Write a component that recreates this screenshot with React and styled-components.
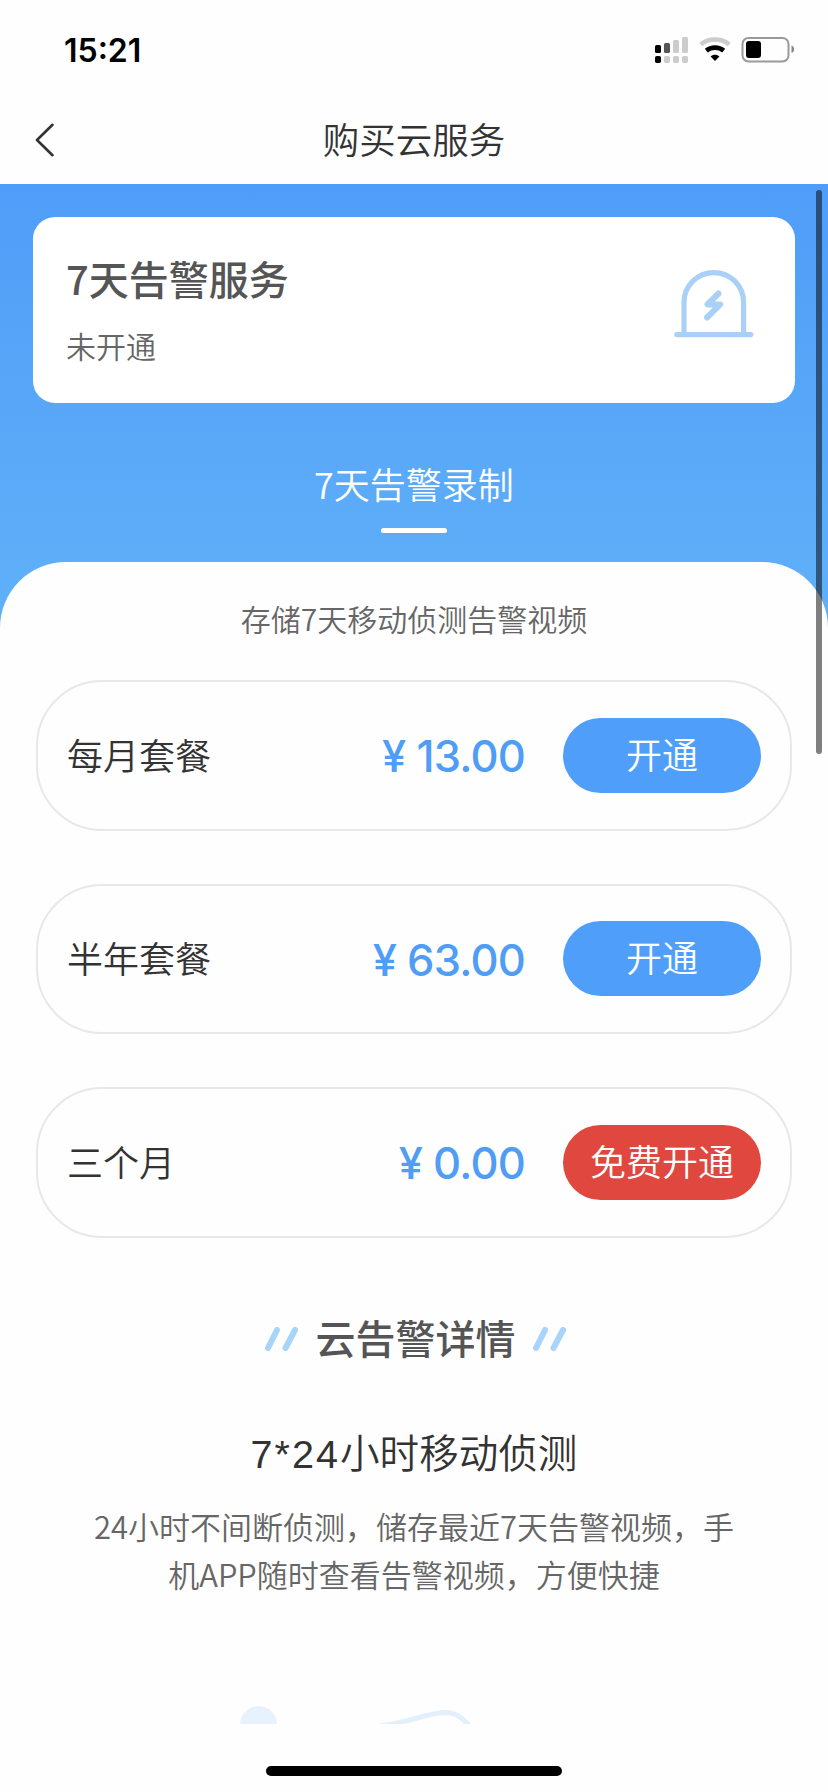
import React from 'react';
import styled, { createGlobalStyle } from 'styled-components';

const plans = [
  { id: 1, name: '每月套餐', price: '13.00', button: '开通', free: false },
  { id: 2, name: '半年套餐', price: '63.00', button: '开通', free: false },
  { id: 3, name: '三个月', price: '0.00', button: '免费开通', free: true },
];

const SignalIcon = () => (
  <svg width='34' height='28' viewBox='0 0 34 28'>
    <rect x='0' y='9' width='6' height='8' rx='1.5' fill='#000' />
    <rect x='9' y='7' width='6' height='10' rx='1.5' fill='#555' />
    <rect x='18' y='4' width='6' height='13' rx='1.5' fill='#ccc' />
    <rect x='27' y='1' width='6' height='16' rx='1.5' fill='#ccc' />
    <rect x='0' y='20' width='6' height='7' rx='1.8' fill='#000' />
    <rect x='9' y='20' width='6' height='7' rx='1.8' fill='#ccc' />
    <rect x='18' y='20' width='6' height='7' rx='1.8' fill='#ccc' />
    <rect x='27' y='20' width='6' height='7' rx='1.8' fill='#ccc' />
  </svg>
);

const WifiIcon = () => (
  <svg width='32' height='26' viewBox='0 0 32 26' fill='none'>
    <path d='M1.8 8.4C9.8 1.8 22.2 1.8 30.2 8.4' stroke='#ccc' strokeWidth='4.6' />
    <path d='M7.3 14.6C12.2 10.6 19.8 10.6 24.7 14.6' stroke='#000' strokeWidth='4.6' />
    <path d='M16 25L11.6 20.6C14 18.2 18 18.2 20.4 20.6Z' fill='#000' />
  </svg>
);

const BatteryIcon = () => (
  <svg width='54' height='27' viewBox='0 0 54 27'>
    <rect x='1.5' y='2' width='46' height='23.5' rx='6' fill='none' stroke='#999' strokeWidth='2' />
    <rect x='5' y='5' width='15' height='17' rx='3' fill='#000' />
    <path d='M50.5 9.5C54 10.5 54 16 50.5 17Z' fill='#888' />
  </svg>
);

const BackIcon = () => (
  <svg width='20' height='34' viewBox='0 0 20 34' fill='none'>
    <path d='M17.5 1.8L2 17L17.5 32.2' stroke='#333' strokeWidth='2.6' strokeLinecap='round' strokeLinejoin='round' />
  </svg>
);

const AlarmIcon = () => (
  <svg width='80' height='68' viewBox='0 0 80 68' fill='none' stroke='#a9d0f7' strokeLinecap='round' strokeLinejoin='round'>
    <path d='M10 64V32.5C10 15.5 23.5 2.6 39.8 2.6S69.6 15.5 69.6 32.5V64' strokeWidth='5.2' />
    <path d='M2.8 64.6H76.8' strokeWidth='5.2' />
    <path d='M44.5 23.5L33.5 34.4H46.2L33 47.5' strokeWidth='6' />
  </svg>
);

const Slashes = () => (
  <svg width='36' height='26' viewBox='0 0 36 26' stroke='#a9d4f9' strokeWidth='6' strokeLinecap='round'>
    <path d='M4 22L13 4M21.5 22L31 4' />
  </svg>
);

const Illustration = () => (
  <svg width='240' height='20' viewBox='0 0 240 20' fill='none'>
    <circle cx='18.5' cy='19.5' r='18.5' fill='#e7f2fd' />
    <path d='M140 21C167 18.5 185 8 205 7.5C216 7.5 222 13 229 20.5' stroke='#e3effb' strokeWidth='5' />
  </svg>
);

const App = () => {
  return (
    <>
      <GlobalStyle />
      <Screen>
        <StatusBar>
          <Time>15:21</Time>
          <StatusIcons>
            <SignalIcon />
            <WifiIcon />
            <BatteryIcon />
          </StatusIcons>
        </StatusBar>
        <NavBar>
          <Back>
            <BackIcon />
          </Back>
          <NavTitle>购买云服务</NavTitle>
        </NavBar>
        <Body>
          <ServiceCard>
            <div>
              <ServiceName>7天告警服务</ServiceName>
              <ServiceState>未开通</ServiceState>
            </div>
            <AlarmIcon />
          </ServiceCard>
          <Tab>7天告警录制</Tab>
          <Panel>
            <PanelDesc>存储7天移动侦测告警视频</PanelDesc>
            <PlanList>
              {plans.map(plan => (
                <Plan key={plan.id}>
                  <PlanName>{plan.name}</PlanName>
                  <Price>
                    <Yen>¥</Yen>
                    {plan.price}
                  </Price>
                  <BuyButton $free={plan.free}>{plan.button}</BuyButton>
                </Plan>
              ))}
            </PlanList>
            <DetailTitle>
              <Slashes />
              <span>云告警详情</span>
              <Slashes />
            </DetailTitle>
            <FeatureTitle>
              <Latin>7*24</Latin>小时移动侦测
            </FeatureTitle>
            <FeatureText>
              24小时不间断侦测，储存最近7天告警视频，手
              <br />
              机APP随时查看告警视频，方便快捷
            </FeatureText>
            <Picture>
              <Illustration />
            </Picture>
          </Panel>
          <ScrollThumb />
        </Body>
        <HomeArea>
          <HomeBar />
        </HomeArea>
      </Screen>
    </>
  );
};

const GlobalStyle = createGlobalStyle`
  * {
    box-sizing: border-box;
  }
  body {
    margin: 0;
    background: #fff;
    font-family: 'Noto Sans CJK SC', sans-serif;
    font-weight: 350;
  }
  svg {
    display: block;
    flex-shrink: 0;
  }
`;

const Screen = styled.div`
  display: flex;
  flex-direction: column;
  width: 828px;
  height: 1792px;
  overflow: hidden;
  background: #fefefe;
`;

const StatusBar = styled.div`
  display: flex;
  justify-content: space-between;
  height: 96px;
  padding: 0 33px 0 64px;
`;

const Time = styled.span`
  font-family: Inter, sans-serif;
  font-size: 32px;
  font-weight: 600;
  line-height: 101px;
  color: #000;
`;

const StatusIcons = styled.div`
  display: flex;
  gap: 10px;
  padding-top: 36px;
`;

const NavBar = styled.div`
  display: grid;
  grid-template-columns: 100px 1fr 100px;
  align-items: center;
  height: 88px;
`;

const Back = styled.div`
  padding-left: 35px;
`;

const NavTitle = styled.div`
  padding-bottom: 2px;
  font-size: 36.5px;
  line-height: 84px;
  text-align: center;
  color: #333;
`;

const Body = styled.div`
  position: relative;
  height: 1540px;
  overflow: hidden;
  background: linear-gradient(#4f9df8 0, #60b1f9 450px);
`;

const ServiceCard = styled.div`
  display: flex;
  justify-content: space-between;
  height: 186px;
  margin: 33px 33px 0;
  padding: 33px 41px 0 33px;
  border-radius: 22px;
  background: #fff;
  svg {
    margin-top: 20px;
  }
`;

const ServiceName = styled.div`
  font-size: 40px;
  font-weight: 500;
  line-height: 57px;
  color: #555;
`;

const ServiceState = styled.div`
  margin-top: 17px;
  font-size: 30px;
  line-height: 42px;
  color: #666;
`;

const Tab = styled.div`
  display: flex;
  flex-direction: column;
  align-items: center;
  height: 159px;
  padding-top: 55px;
  font-size: 36px;
  line-height: 50px;
  color: #fff;
  &::after {
    content: '';
    width: 66px;
    height: 5px;
    margin-top: 20px;
    border-radius: 3px;
    background: #fff;
  }
`;

const Panel = styled.div`
  height: 1162px;
  padding: 35px 36px 0;
  border-radius: 66px 66px 0 0;
  background: #fefefe;
`;

const PanelDesc = styled.div`
  font-size: 30px;
  line-height: 42px;
  text-align: center;
  color: #666;
`;

const PlanList = styled.div`
  display: grid;
  gap: 53px;
  margin-top: 41px;
`;

const Plan = styled.div`
  display: flex;
  align-items: center;
  height: 150.5px;
  padding: 0 29px;
  border: 2px solid #e8e8e8;
  border-radius: 66px;
`;

const PlanName = styled.span`
  flex: 1;
  padding-bottom: 3px;
  font-size: 36px;
  line-height: 50px;
  color: #333;
`;

const Price = styled.span`
  margin-right: 38px;
  padding-top: 2px;
  font-family: Inter, sans-serif;
  font-size: 43.5px;
  font-weight: 500;
  line-height: 50px;
  letter-spacing: -0.8px;
  color: #4f9df5;
`;

const Yen = styled.span`
  margin-right: 11px;
`;

const BuyButton = styled.button`
  width: 198px;
  height: 75px;
  padding: 0 0 5px;
  border: 0;
  border-radius: 38px;
  background: ${({ $free }) => ($free ? '#df473f' : '#4f9ffa')};
  font-family: inherit;
  font-size: 36px;
  font-weight: 350;
  line-height: 50px;
  color: #fff;
  cursor: pointer;
`;

const DetailTitle = styled.div`
  display: flex;
  justify-content: center;
  align-items: center;
  gap: 16px;
  margin-top: 71px;
  padding-left: 3px;
  font-size: 40px;
  font-weight: 500;
  line-height: 56px;
  color: #555;
  svg {
    margin-top: 5px;
  }
`;

const FeatureTitle = styled.div`
  margin-top: 58px;
  font-size: 39.6px;
  line-height: 56px;
  text-align: center;
  color: #333;
`;

const Latin = styled.span`
  font-family: 'Liberation Sans', sans-serif;
  letter-spacing: 2px;
`;

const FeatureText = styled.div`
  margin-top: 20px;
  font-size: 31px;
  line-height: 48.5px;
  text-align: center;
  white-space: nowrap;
  color: #666;
`;

const Picture = styled.div`
  margin: 106px 0 0 204px;
`;

// 滚动条
const ScrollThumb = styled.div`
  position: absolute;
  top: 6px;
  right: 6px;
  width: 6px;
  height: 564px;
  border-radius: 3px;
  background: rgba(0, 0, 0, 0.5);
`;

const HomeArea = styled.div`
  display: flex;
  justify-content: center;
  padding-top: 42px;
`;

const HomeBar = styled.div`
  width: 296px;
  height: 10px;
  border-radius: 5px;
  background: #000;
`;

export default App;
